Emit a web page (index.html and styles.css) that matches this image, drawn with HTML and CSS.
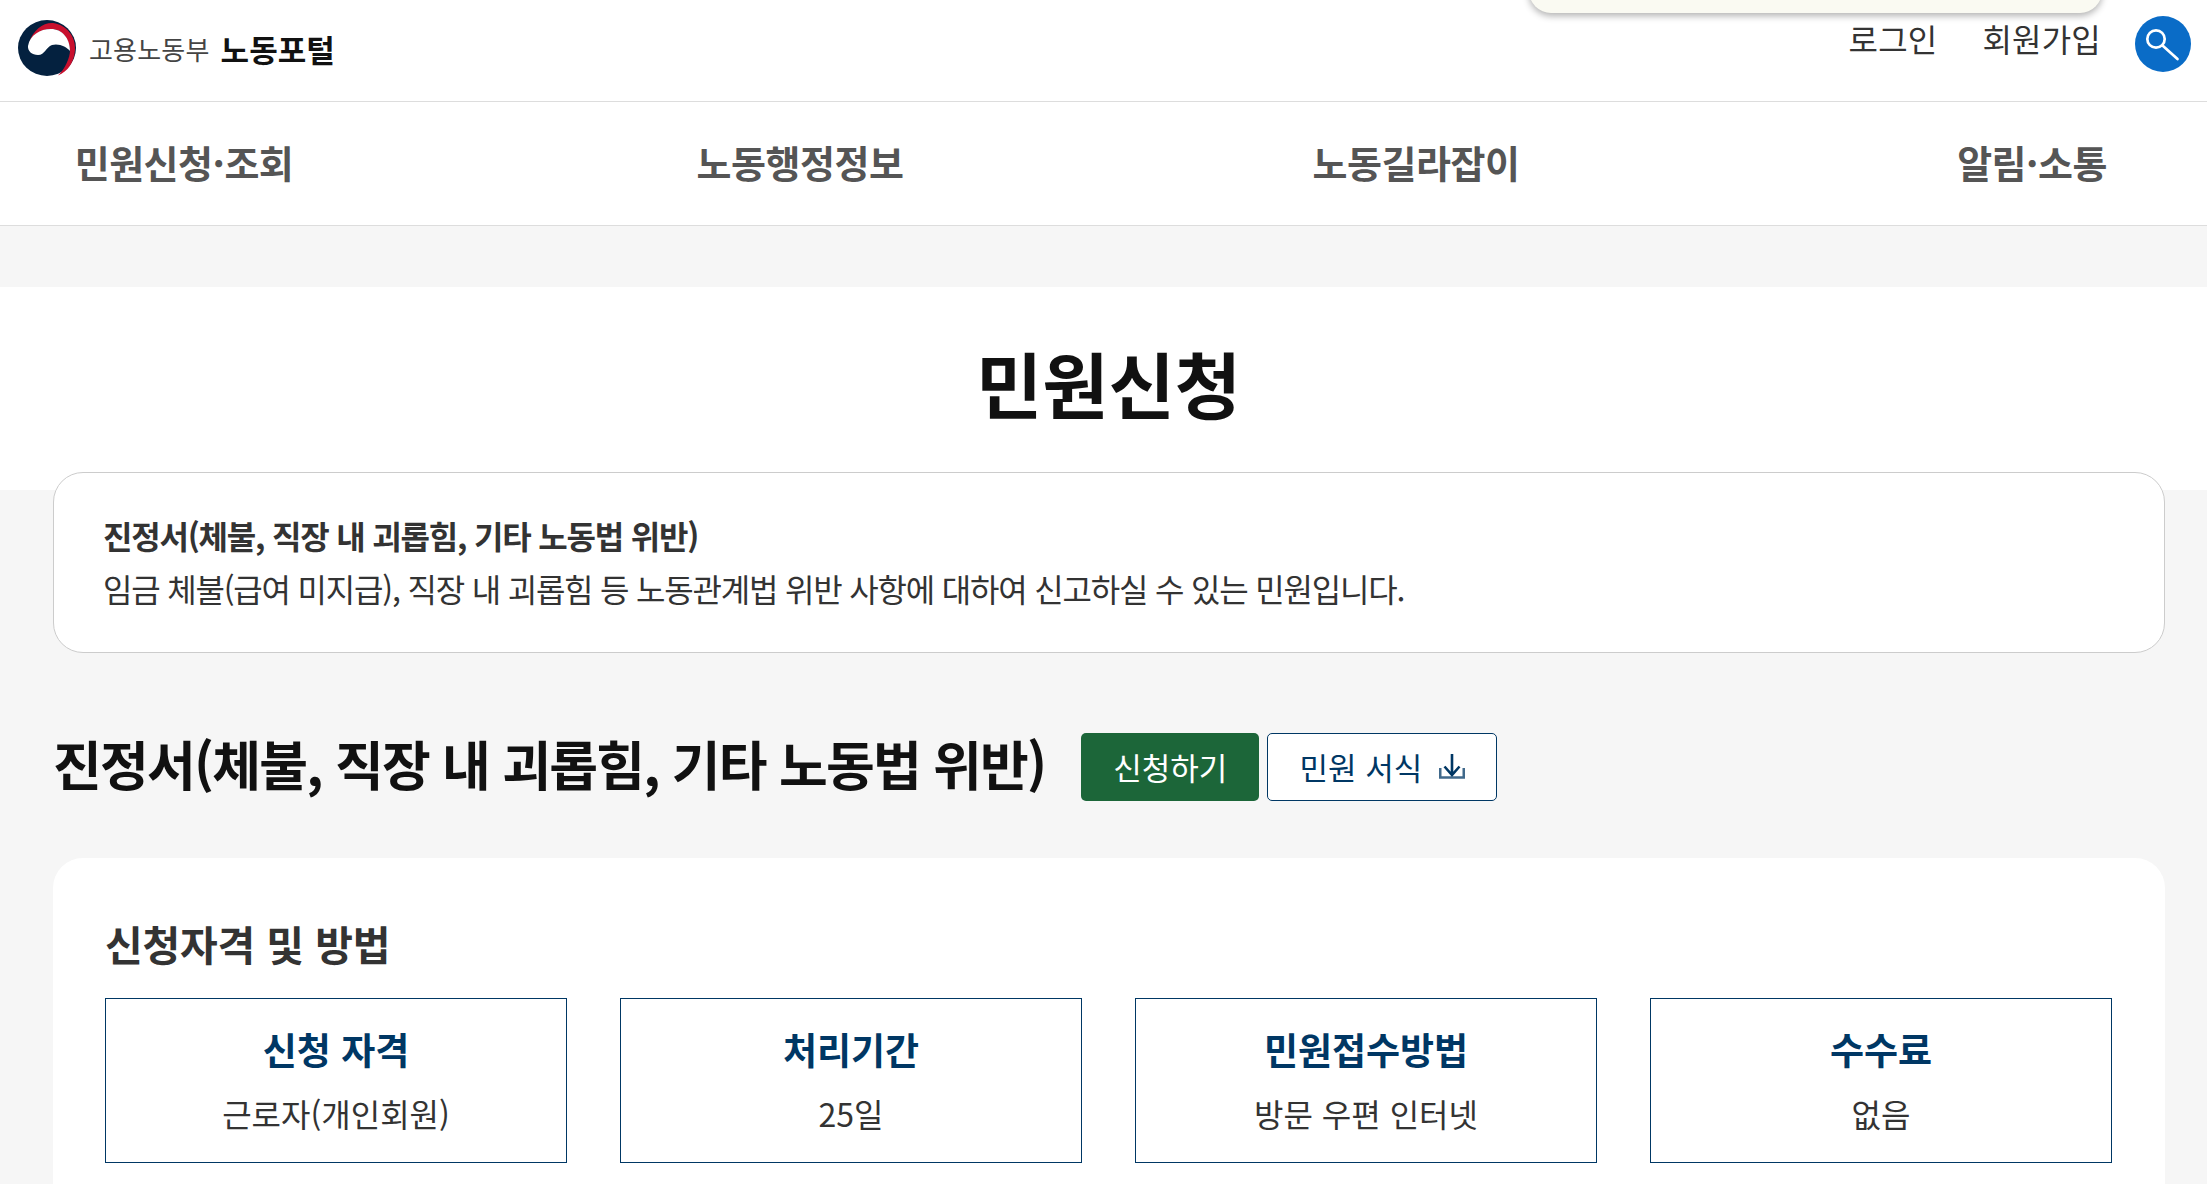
FILE: index.html
```html
<!DOCTYPE html>
<html lang="ko">
<head>
    <meta charset="UTF-8">
    <title>민원신청</title>
    <link rel="stylesheet" href="styles.css">
</head>
<body>
    <div class="popup"></div>

    <header class="top">
        <a class="logo" href="#">
            <svg class="emblem" viewBox="0 0 58 56" width="58" height="56">
                <ellipse cx="29" cy="28" rx="29" ry="28" fill="#04213f"/>
                <path d="M11 23C15 10 25 2.5 35 3C49 5 58 17 57 30C56 43 50 51 40 55.5C47 49 52 38 52 30C51 18 44 9 33 9C24 9 15 14 11 23z" fill="#c8102e"/>
                <path d="M10 26C12 15 22 9 33 9C44 9 52 18 52 31C49 27 41 23 34 25C28 27 27 35 20 35C14 35 9.5 31 10 26z" fill="#fff"/>
            </svg>
            <span class="logo-org">고용노동부</span>
            <span class="logo-name">노동포털</span>
        </a>
        <nav class="util">
            <a href="#">로그인</a>
            <a href="#">회원가입</a>
            <button class="search" aria-label="검색">
                <svg viewBox="0 0 56 56" width="56" height="56" fill="none" stroke="#fff" stroke-width="2.7" stroke-linecap="round">
                    <circle cx="21" cy="23" r="8.7"/>
                    <path d="M27.5 29.5L42.5 43"/>
                </svg>
            </button>
        </nav>
    </header>

    <nav class="gnb">
        <a href="#">민원신청·조회</a>
        <a href="#">노동행정정보</a>
        <a href="#">노동길라잡이</a>
        <a href="#">알림·소통</a>
    </nav>

    <div class="title-band">
        <h1>민원신청</h1>
    </div>

    <main class="content">
        <section class="notice">
            <strong>진정서(체불, 직장 내 괴롭힘, 기타 노동법 위반)</strong>
            <p>임금 체불(급여 미지급), 직장 내 괴롭힘 등 노동관계법 위반 사항에 대하여 신고하실 수 있는 민원입니다.</p>
        </section>

        <div class="doc-head">
            <h2>진정서(체불, 직장 내 괴롭힘, 기타 노동법 위반)</h2>
            <a class="btn btn-apply" href="#">신청하기</a>
            <a class="btn btn-form" href="#">민원 서식
                <svg viewBox="0 0 26 25" width="26" height="25" fill="none" stroke="#003764">
                    <path d="M13 0V21M5.5 12.5L13 21L20.5 12.5" stroke-width="2.6"/>
                    <path d="M1.2 14V23.5H24.8V14" stroke-width="2.6" stroke-opacity=".75"/>
                </svg>
            </a>
        </div>

        <section class="panel">
            <h3>신청자격 및 방법</h3>
            <div class="facts">
                <div class="fact">
                    <b>신청 자격</b>
                    <span>근로자(개인회원)</span>
                </div>
                <div class="fact">
                    <b>처리기간</b>
                    <span>25일</span>
                </div>
                <div class="fact">
                    <b>민원접수방법</b>
                    <span>방문 우편 인터넷</span>
                </div>
                <div class="fact">
                    <b>수수료</b>
                    <span>없음</span>
                </div>
            </div>
        </section>
    </main>
</body>
</html>
```

FILE: styles.css
```css
* {
    box-sizing: border-box;
}

html, body {
    height: 100%;
    overflow: hidden;
}

body {
    margin: 0;
    position: relative;
    background-color: #f6f6f6;
    color: #333;
    font-family: "Noto Sans CJK KR", "Noto Sans", sans-serif;
}

a {
    color: inherit;
    text-decoration: none;
}

h1, h2, h3, p {
    margin: 0;
}

/* notice popup that hangs over the top edge */
.popup {
    position: absolute;
    top: -40px;
    left: 1529px;
    width: 573px;
    height: 53px;
    background-color: #fafaf2;
    border-radius: 22px;
    box-shadow: 0 3px 7px rgba(0, 0, 0, 0.3);
}

.top {
    display: flex;
    justify-content: space-between;
    height: 102px;
    padding: 0 16px 0 18px;
    background-color: #fff;
    border-bottom: 1px solid #ddd;
}

.logo {
    display: flex;
    align-items: center;
    height: 96px;
}

.emblem {
    margin-right: 13px;
}

.logo-org {
    font-size: 26px;
    letter-spacing: 0.2px;
    color: #444;
    margin-right: 11px;
}

.logo-name {
    font-size: 31px;
    font-weight: 700;
    color: #111;
}

.util {
    display: flex;
    align-items: flex-start;
    padding-top: 16px;
    font-size: 32px;
    line-height: 45px;
    letter-spacing: 0.2px;
}

.util a {
    margin-right: 45px;
}

.util a:nth-child(2) {
    margin-right: 34px;
}

.search {
    width: 56px;
    height: 56px;
    padding: 0;
    border: none;
    border-radius: 50%;
    background-color: #0a6cc7;
}

.search svg {
    display: block;
}

.gnb {
    display: flex;
    gap: 296px;
    height: 124px;
    padding-left: 24px;
    background-color: #fff;
    border-bottom: 1px solid #ddd;
}

.gnb a {
    flex: 0 0 320px;
    text-align: center;
    font-size: 38px;
    font-weight: 700;
    line-height: 120px;
    letter-spacing: -0.5px;
    color: #555;
}

.title-band {
    height: 203px;
    margin-top: 61px;
    padding: 45px 0 0 10px;
    background-color: #fff;
    text-align: center;
}

h1 {
    font-size: 72px;
    font-weight: 700;
    line-height: 100px;
    color: #111;
}

.content {
    padding: 0 42px 0 53px;
}

.notice {
    margin-top: -18px;
    position: relative;
    height: 181px;
    padding: 36px 49px 0;
    background-color: #fff;
    border: 1px solid #ccc;
    border-radius: 30px;
    font-size: 32px;
    line-height: 53px;
    letter-spacing: -1.2px;
}

.doc-head {
    display: flex;
    align-items: center;
    margin-top: 80px;
    height: 68px;
}

h2 {
    font-size: 53px;
    font-weight: 700;
    color: #111;
    letter-spacing: -1.75px;
    margin: -8px 36px 0 0;
}

.btn {
    display: flex;
    align-items: center;
    justify-content: center;
    height: 68px;
    padding-bottom: 2px;
    border-radius: 5px;
    font-size: 31px;
}

.btn-apply {
    width: 178px;
    margin-right: 8px;
    background-color: #1c6639;
    color: #fff;
}

.btn-form {
    width: 230px;
    gap: 17px;
    background-color: #fff;
    border: 1px solid #003764;
    color: #003764;
}

/* runs on below the fold in the original, so no bottom corners here */
.panel {
    margin-top: 57px;
    height: 326px;
    padding: 55px 52px 0;
    background-color: #fff;
    border-radius: 30px 30px 0 0;
}

h3 {
    font-size: 41px;
    font-weight: 700;
    letter-spacing: -0.2px;
    line-height: 60px;
    margin-bottom: 25px;
}

.facts {
    display: grid;
    grid-template-columns: repeat(4, 462px);
    column-gap: 53px;
}

.fact {
    display: flex;
    flex-direction: column;
    align-items: center;
    height: 165px;
    padding-top: 25px;
    border: 1px solid #003764;
    font-size: 32px;
}

.fact b {
    font-size: 37px;
    line-height: 50px;
    color: #003764;
    margin-bottom: 16px;
}
```
